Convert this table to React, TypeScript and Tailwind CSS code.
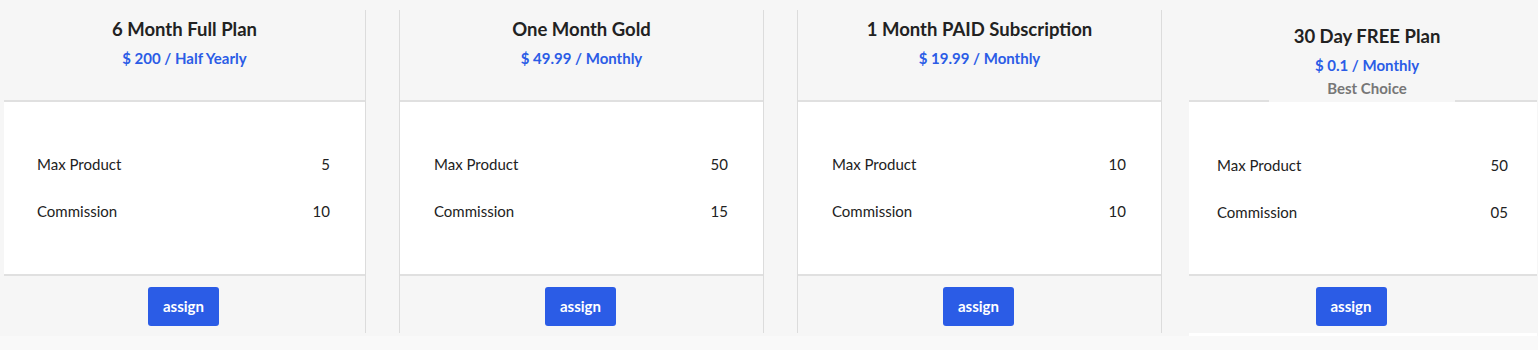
type Plan = {
  title: string;
  price: string;
  maxProduct: string;
  commission: string;
};

const plans: Plan[] = [
  { title: '6 Month Full Plan', price: '$ 200 / Half Yearly', maxProduct: '5', commission: '10' },
  { title: 'One Month Gold', price: '$ 49.99 / Monthly', maxProduct: '50', commission: '15' },
  { title: '1 Month PAID Subscription', price: '$ 19.99 / Monthly', maxProduct: '10', commission: '10' },
];

function Row({ label, value }: { label: string; value: string }) {
  return (
    <div className="flex items-center justify-between h-[20px] text-[15px] leading-[20px] text-[#222]">
      <span>{label}</span>
      <span>{value}</span>
    </div>
  );
}

function AssignButton() {
  return (
    <button className="h-[39px] w-[71px] rounded-[3px] bg-[#2b5ce6] text-white text-[15px] font-bold leading-none">
      assign
    </button>
  );
}

function PlanCard({ plan, index }: { plan: Plan; index: number }) {
  const first = index === 0;
  return (
    <div
      className={
        first
          ? 'flex flex-col w-[362px] mt-[10px] border-r border-[#dcdcdc]'
          : 'flex flex-col w-[365px] mt-[10px] border-x border-[#dcdcdc]'
      }
    >
      <div className="h-[92px] flex flex-col items-center pt-[8px] border-b-2 border-[#e0e0e0]">
        <h2 className="text-[18.5px] leading-[22px] font-bold text-[#222]">{plan.title}</h2>
        <p className="mt-[8px] text-[15px] leading-[20px] font-bold text-[#2b5ce6]">{plan.price}</p>
      </div>
      <div
        className={
          first
            ? 'h-[174px] bg-white border-b-2 border-[#e0e0e0] pt-[52px] pl-[33px] pr-[35px] flex flex-col gap-[27px]'
            : 'h-[174px] bg-white border-b-2 border-[#e0e0e0] pt-[52px] pl-[34px] pr-[35px] flex flex-col gap-[27px]'
        }
      >
        <Row label="Max Product" value={plan.maxProduct} />
        <Row label="Commission" value={plan.commission} />
      </div>
      <div className="h-[57px] flex justify-center pt-[11px] pr-[2px]">
        <AssignButton />
      </div>
    </div>
  );
}

function FeaturedCard() {
  return (
    <div className="flex flex-col w-[348px] mt-[10px] ml-[27px]">
      <div className="h-[92px] flex flex-col items-center pt-[15px] pl-[8px] border-b-2 border-[#e0e0e0]">
        <h2 className="text-[18.5px] leading-[22px] font-bold text-[#222]">30 Day FREE Plan</h2>
        <p className="mt-[8px] text-[15px] leading-[20px] font-bold text-[#2b5ce6]">$ 0.1 / Monthly</p>
        <p className="relative z-10 -mb-[2px] mt-[3px] mr-[10px] w-[186px] h-[24px] bg-[#f6f6f6] pl-[10px] text-center text-[15px] leading-[20px] font-bold text-[#777]">
          Best Choice
        </p>
      </div>
      <div className="h-[174px] bg-white border-b-2 border-[#e0e0e0] pt-[53px] pl-[28px] pr-[29px] flex flex-col gap-[27px]">
        <Row label="Max Product" value="50" />
        <Row label="Commission" value="05" />
      </div>
      <div className="h-[60px] flex justify-center pt-[11px] pr-[24px] border-b-[3px] border-white">
        <AssignButton />
      </div>
    </div>
  );
}

export default function App() {
  return (
    <div className="h-[350px] bg-[#f9f9f9] font-['Lato','Liberation_Sans',sans-serif]">
      <div className="flex h-[336px] bg-[#f6f6f6] pl-[4px]">
        {plans.map((plan, i) => (
          <div key={plan.title} className={i === 0 ? '' : 'ml-[33px]'}>
            <PlanCard plan={plan} index={i} />
          </div>
        ))}
        <FeaturedCard />
      </div>
    </div>
  );
}
